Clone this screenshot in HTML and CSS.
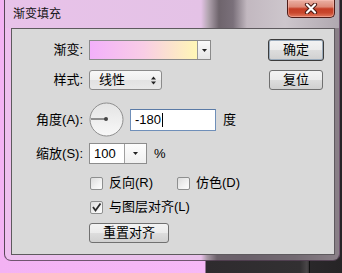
FILE: index.html
```html
<!DOCTYPE html>
<html>
<head>
<meta charset="utf-8">
<link rel="stylesheet" href="styles.css">
</head>
<body>
<div class="desk-line"></div>
<div class="window">
  <div class="titlebar">
    <span class="title">渐变填充</span>
    <div class="close">
      <svg width="14" height="11" viewBox="0 0 14 11">
        <path d="M3 1.5 L11 9.5 M11 1.5 L3 9.5" stroke="#4a1a14" stroke-width="4.2" stroke-linecap="round" fill="none"/>
        <path d="M3 1.5 L11 9.5 M11 1.5 L3 9.5" stroke="#ffffff" stroke-width="2.2" stroke-linecap="round" fill="none"/>
      </svg>
    </div>
  </div>
  <div class="client">
    <div class="form">
      <div class="row r1">
        <span class="lbl">渐变:</span>
        <div class="grad">
          <div class="grad-fill"></div>
          <div class="grad-btn"><svg width="5" height="3" viewBox="0 0 5 3"><path d="M0 0H5L2.5 3Z" fill="#222"/></svg></div>
        </div>
      </div>
      <div class="row r2">
        <span class="lbl">样式:</span>
        <div class="select">
          <span class="sel-text">线性</span>
          <svg class="spin" width="5" height="9" viewBox="0 0 5 9"><path d="M0 3.5H5L2.5 0.5Z M0 5.5H5L2.5 8.5Z" fill="#222"/></svg>
        </div>
      </div>
      <div class="row r3">
        <span class="lbl">角度(A):</span>
        <svg class="dial" width="35" height="35" viewBox="0 0 35 35">
          <defs>
            <linearGradient id="dg" x1="0" y1="0" x2="0" y2="1">
              <stop offset="0" stop-color="#e4e4e4"/>
              <stop offset="1" stop-color="#f8f8f8"/>
            </linearGradient>
          </defs>
          <circle cx="17.5" cy="17.5" r="16.5" fill="url(#dg)" stroke="#8e8e8e" stroke-width="1"/>
          <line x1="2" y1="17" x2="17" y2="17" stroke="#505050" stroke-width="1.2"/>
          <circle cx="17" cy="17" r="2" fill="#444"/>
        </svg>
        <div class="input"><span>-180</span><span class="caret"></span></div>
        <span class="unit">度</span>
      </div>
      <div class="row r4">
        <span class="lbl">缩放(S):</span>
        <div class="combo">
          <span class="combo-text">100</span>
          <div class="combo-btn"><svg width="5" height="3" viewBox="0 0 5 3"><path d="M0 0H5L2.5 3Z" fill="#222"/></svg></div>
        </div>
        <span class="unit">%</span>
      </div>
      <div class="row r5 checks">
        <label class="check w87"><span class="box"></span><span>反向(R)</span></label>
        <label class="check"><span class="box"></span><span>仿色(D)</span></label>
      </div>
      <div class="row r6 checks">
        <label class="check"><span class="box">
          <svg width="11" height="11" viewBox="0 0 11 11"><path d="M2 5 L4.5 8.5 L9.5 1.5" stroke="#2a2a2a" stroke-width="1.8" fill="none"/></svg>
        </span><span>与图层对齐(L)</span></label>
      </div>
      <div class="row r7">
        <button class="btn reset-align">重置对齐</button>
      </div>
    </div>
    <div class="side">
      <button class="btn ok">确定</button>
      <button class="btn reset">复位</button>
    </div>
  </div>
</div>
</body>
</html>
```

FILE: styles.css
```css
* { box-sizing: border-box; }

html, body {
  margin: 0;
  padding: 0;
}

body {
  width: 342px;
  height: 273px;
  overflow: hidden;
  position: relative;
  background: linear-gradient(90deg, #f3b2f3 0, #f6b8f6 205px, #2e2b2e 206px, #323032 300px, #4a4749 307px, #2a282a 310px, #262426 100%);
  font-family: "Liberation Sans", "Noto Sans CJK SC", sans-serif;
  font-size: 13px;
  color: #000;
}

.desk-line {
  position: absolute;
  left: 309px;
  top: 0;
  width: 1px;
  height: 273px;
  background: #111;
}

.window {
  position: relative;
  margin-left: 4px;
  width: 336px;
  height: 261px;
  border: 1px solid rgba(70, 50, 70, 0.75);
  border-top: none;
  border-radius: 0 0 7px 7px;
  background: linear-gradient(90deg, #eebfee 0, #e9c0ea 196px, #a898a6 202px, #6c626b 212px, #6a606a 240px, #736a72 290px, #8a8088 100%);
  padding: 0 4px 5px 6px;
  display: flex;
  flex-direction: column;
}

.titlebar {
  height: 28px;
  display: flex;
  justify-content: space-between;
  align-items: flex-start;
  margin: 0 -4px 0 -6px;
  padding: 0 4px 0 8px;
  background: linear-gradient(90deg, #e8c2e9 0, #e4c2e6 196px, #b4a6b2 203px, #6e646c 214px, #7a707a 228px, #c2b8c0 242px, #cdc6cc 280px, #b0a8b0 100%);
}

.title {
  font-size: 12px;
  line-height: 12px;
  margin-top: 8px;
  color: #141414;
}

.close {
  width: 48px;
  height: 18px;
  border: 1px solid #4e1c18;
  border-top: none;
  border-radius: 0 0 5px 5px;
  background: linear-gradient(#eab0a4 0, #de8a78 40%, #c53d25 52%, #c9472d 75%, #e27a5f 100%);
  display: flex;
  align-items: center;
  justify-content: center;
  box-shadow: inset 0 0 0 1px rgba(255, 200, 190, 0.45);
}

.client {
  flex: 1;
  border: 1px solid #5e5a5e;
  background: #d9d9d9;
  display: flex;
  padding: 10px 10px 0 0;
}

.form {
  flex: 1;
  display: flex;
  flex-direction: column;
}

.row {
  display: flex;
  align-items: center;
}

.r1 { height: 22px; }
.r2 { height: 20px; margin-top: 9px; }
.r3 { height: 35px; margin-top: 12px; }
.r4 { height: 21px; margin-top: 6px; }
.r5 { height: 16px; margin-top: 11px; }
.r6 { height: 16px; margin-top: 8px; }
.r7 { height: 20px; margin-top: 8px; }

.lbl {
  width: 71px;
  margin-right: 6px;
  text-align: right;
  line-height: 14px;
  white-space: nowrap;
}

.grad {
  width: 122px;
  height: 20px;
  border: 1px solid #8a8a8a;
  display: flex;
  background: #fff;
}

.grad-fill {
  flex: 1;
  background: linear-gradient(90deg, #f3b0fb 0, #f8cde6 50%, #fff7b6 100%);
}

.grad-btn {
  width: 13px;
  border-left: 1px solid #9a9a9a;
  background: linear-gradient(#fafafa, #e6e6e6);
  display: flex;
  align-items: center;
  justify-content: center;
}

.select {
  width: 73px;
  height: 20px;
  border: 1px solid #8b8b8b;
  border-radius: 3px;
  background: linear-gradient(#f8f8f8 0, #efefef 50%, #e2e2e2 51%, #e8e8e8 100%);
  display: flex;
  align-items: center;
  justify-content: space-between;
  padding: 0 5px 0 9px;
}

.sel-text {
  line-height: 14px;
}

.dial {
  margin-right: 6px;
  display: block;
}

.input {
  width: 86px;
  height: 22px;
  border: 1px solid #6f8fb9;
  border-top-color: #5a7aa6;
  background: #fff;
  display: flex;
  align-items: center;
  padding-left: 4px;
  line-height: 14px;
}

.caret {
  display: inline-block;
  width: 1px;
  height: 14px;
  background: #000;
  margin-left: 1px;
}

.unit {
  margin-left: 7px;
  line-height: 14px;
}

.combo {
  width: 58px;
  height: 21px;
  border: 1px solid #8d8d8d;
  background: #fff;
  display: flex;
}

.combo-text {
  width: 34px;
  padding-left: 4px;
  display: flex;
  align-items: center;
  line-height: 14px;
}

.combo-btn {
  flex: 1;
  border-left: 1px solid #a0a0a0;
  background: linear-gradient(#fdfdfd, #f0f0f0);
  display: flex;
  align-items: center;
  justify-content: center;
}

.checks {
  padding-left: 78px;
}

.check {
  display: flex;
  align-items: center;
  line-height: 14px;
  white-space: nowrap;
}

.w87 {
  width: 87px;
}

.box {
  width: 13px;
  height: 13px;
  border: 1px solid #8e8f8f;
  border-radius: 2px;
  background: linear-gradient(135deg, #dcdcdc 0, #f2f2f2 60%, #fdfdfd 100%);
  margin-right: 6px;
  display: flex;
  align-items: center;
  justify-content: center;
}

.btn {
  font-family: inherit;
  font-size: 13px;
  line-height: 14px;
  color: #000;
  border: 1px solid #707070;
  border-radius: 3px;
  background: linear-gradient(#f3f3f3 0, #ebebeb 50%, #dddddd 51%, #d0d0d0 100%);
  padding: 0;
  margin: 0;
  display: flex;
  align-items: center;
  justify-content: center;
}

.reset-align {
  margin-left: 77px;
  width: 80px;
  height: 20px;
}

.side {
  width: 56px;
  display: flex;
  flex-direction: column;
  align-items: flex-end;
}

.ok {
  width: 56px;
  height: 22px;
  border: 1px solid #3c3c3c;
  box-shadow: inset 0 0 0 1px #9ab;
}

.reset {
  width: 54px;
  height: 20px;
  margin-top: 9px;
  margin-right: 1px;
}
```
